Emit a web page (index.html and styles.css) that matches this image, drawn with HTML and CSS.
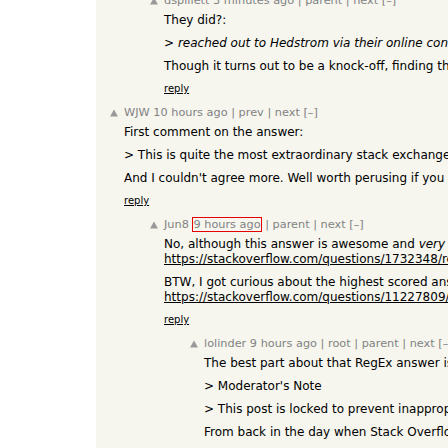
FILE: index.html
```html
<!DOCTYPE html>
<html lang="en">
<head>
<meta charset="utf-8">
<title>Comments</title>
<link rel="stylesheet" href="styles.css">
</head>
<body>
<div class="page">
  <div class="gutter"></div>
  <div class="main">
    <div class="thread">

      <div class="comment l1">
        <div class="vote"><svg width="8" height="14" viewBox="0 0 8 14"><polygon points="4,3.5 8,10.5 0,10.5"/></svg></div>
        <div class="body">
          <div class="meta"><a class="user">dspillett</a> <a>3 minutes ago</a> | <a>parent</a> | <a>next</a> [–]</div>
          <div class="text">
            <p>They did?:</p>
            <p>&gt; <i>reached out to Hedstrom via their online contact form and they confirmed it</i></p>
            <p>Though it turns out to be a knock-off, finding that out was a fun little detour.</p>
          </div>
          <div class="reply"><a class="rl">reply</a></div>
        </div>
      </div>

      <div class="comment l0">
        <div class="vote"><svg width="8" height="14" viewBox="0 0 8 14"><polygon points="4,3.5 8,10.5 0,10.5"/></svg></div>
        <div class="body">
          <div class="meta"><a class="user">WJW</a> <a>10 hours ago</a> | <a>prev</a> | <a>next</a> [–]</div>
          <div class="text">
            <p>First comment on the answer:</p>
            <p>&gt; This is quite the most extraordinary stack exchange answer I have ever read.</p>
            <p>And I couldn't agree more. Well worth perusing if you haven't seen it before.</p>
          </div>
          <div class="reply"><a class="rl">reply</a></div>
        </div>
      </div>

      <div class="comment l1">
        <div class="vote"><svg width="8" height="14" viewBox="0 0 8 14"><polygon points="4,3.5 8,10.5 0,10.5"/></svg></div>
        <div class="body">
          <div class="meta"><a class="user">Jun8</a> <a class="mark">9 hours ago</a> | <a>parent</a> | <a>next</a> [–]</div>
          <div class="text">
            <p>No, although this answer is awesome and <i>very</i> famous, it's a different one:<br><a class="link">https://stackoverflow.com/questions/1732348/regex-match-open-tags-except-xhtml-self-contained-tags</a></p>
            <p>BTW, I got curious about the highest scored answer on the site, it's this one:<br><a class="link">https://stackoverflow.com/questions/11227809/why-is-processing-a-sorted-array-faster</a></p>
          </div>
          <div class="reply"><a class="rl">reply</a></div>
        </div>
      </div>

      <div class="comment l2">
        <div class="vote"><svg width="8" height="14" viewBox="0 0 8 14"><polygon points="4,3.5 8,10.5 0,10.5"/></svg></div>
        <div class="body">
          <div class="meta"><a class="user">lolinder</a> <a>9 hours ago</a> | <a>root</a> | <a>parent</a> | <a>next</a> [–]</div>
          <div class="text">
            <p>The best part about that RegEx answer is the note at the top:</p>
            <p>&gt; Moderator's Note</p>
            <p>&gt; This post is locked to prevent inappropriate edits to its content.</p>
            <p>From back in the day when Stack Overflow had a sense of humor.</p>
          </div>
          <div class="reply"><a class="rl">reply</a></div>
        </div>
      </div>

    </div>
  </div>
</div>
</body>
</html>
```

FILE: styles.css
```css
html, body {
  margin: 0;
  padding: 0;
  background: #ffffff;
}

body {
  font-family: "DejaVu Sans", Verdana, Geneva, sans-serif;
  height: 448px;
  overflow: hidden;
}

.page {
  display: flex;
  height: 448px;
}

.gutter {
  flex: none;
  width: 96px;
  background: #ffffff;
}

.main {
  flex: 1;
  min-width: 0;
  background: #f6f6ef;
  overflow: hidden;
}

.thread {
  margin-top: -6px;
}

.comment {
  display: flex;
  white-space: nowrap;
  margin-bottom: 11px;
}

.comment.l1 {
  padding-left: 40px;
}

.comment.l2 {
  padding-left: 80px;
}

.vote {
  flex: none;
  width: 28px;
  padding-left: 14px;
  box-sizing: border-box;
}

.vote svg {
  display: block;
  fill: #9a9a9a;
}

.body {
  flex: 1;
  min-width: 0;
}

.meta {
  font-size: 11.3px;
  line-height: 14px;
  color: #828282;
  margin-bottom: 5px;
}

.meta a {
  color: #828282;
  text-decoration: none;
}

.meta .mark {
  border: 1px solid #e60000;
}

.text {
  font-size: 12px;
  line-height: 15px;
  color: #000000;
}

.text p {
  margin: 8px 0 0;
}

.text p:first-child {
  margin-top: 0;
}

.text .link {
  color: #000000;
  text-decoration: underline;
}

.reply {
  font-size: 10px;
  line-height: 12px;
  margin-top: 9px;
}

.reply .rl {
  color: #000000;
  text-decoration: underline;
}
```
